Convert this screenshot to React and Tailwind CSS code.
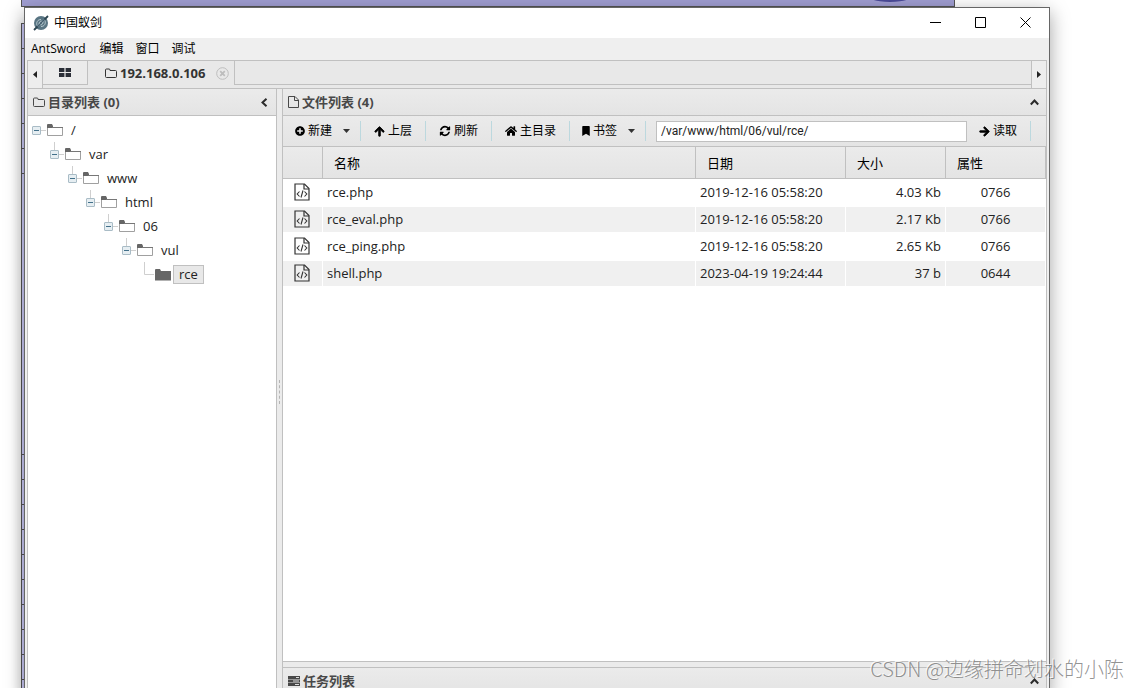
import React from "react";
import { FaPlusCircle, FaArrowUp, FaHome, FaBookmark, FaArrowRight } from "react-icons/fa";

const files = [
  { name: "rce.php", date: "2019-12-16 05:58:20", size: "4.03 Kb", mode: "0766" },
  { name: "rce_eval.php", date: "2019-12-16 05:58:20", size: "2.17 Kb", mode: "0766" },
  { name: "rce_ping.php", date: "2019-12-16 05:58:20", size: "2.65 Kb", mode: "0766" },
  { name: "shell.php", date: "2023-04-19 19:24:44", size: "37 b", mode: "0644" },
];

const path = ["/", "var", "www", "html", "06", "vul", "rce"];

function Logo() {
  return (
    <svg className="size-4" viewBox="0 0 16 16" aria-hidden="true">
      <circle cx="8" cy="8" r="7" fill="#587482" />
      <path d="M4 10.500c-1-3 0.500-6 4-6M12 5.500c1 3-0.500 6-4 6M6 9.500c0-2 0.500-3 2.500-3.500M10 6.500c0 2-0.500 3-2.500 3.500" stroke="#c3d3d8" strokeWidth="0.900" fill="none" />
      <path d="M1 15L4.500 11.500M11.500 4.500L15 1" stroke="#2c4450" strokeWidth="1.800" />
      <path d="M4.500 11.500L11.500 4.500" stroke="#40586a" strokeWidth="0.900" />
    </svg>
  );
}

function FolderOutline() {
  return (
    <svg className="w-3 h-[11px] shrink-0" viewBox="0 0 12 11" fill="none" stroke="currentColor" aria-hidden="true">
      <path d="M0.500 2Q0.500 1 1.500 1H4Q5 1 5 2V2.500H10.500Q11.500 2.500 11.500 3.500V8.500Q11.500 9.500 10.500 9.500H1.500Q0.500 9.500 0.500 8.500Z" />
    </svg>
  );
}

function FileOutline() {
  return (
    <svg className="w-[11px] h-3 shrink-0" viewBox="0 0 11 12" fill="none" stroke="currentColor" aria-hidden="true">
      <path d="M0.500 0.500H7L10.500 4V11.500H0.500ZM6.500 0.500V4.500H10.500" />
    </svg>
  );
}

function CodeFile() {
  return (
    <svg className="w-4 h-[18px] ml-[7px]" viewBox="0 0 16 18" fill="none" stroke="#333" aria-hidden="true">
      <path d="M1 1H10.500L15 5.500V17H1Z" strokeWidth="1.200" />
      <path d="M10 1V6H15" strokeWidth="1.200" />
      <path d="M5.500 8.500L3.200 11L5.500 13.500M10.500 8.500L12.800 11L10.500 13.500M9 7.500L7 14.500" strokeWidth="1.100" />
    </svg>
  );
}

function Refresh() {
  return (
    <svg className="size-3" viewBox="0 0 1792 1792" fill="currentColor" aria-hidden="true">
      <path d="M1639 1056q0 5-1 7-64 268-268 434.500t-478 166.500q-146 0-282.500-55t-243.500-157l-129 129q-19 19-45 19t-45-19-19-45v-448q0-26 19-45t45-19h448q26 0 45 19t19 45-19 45l-137 137q71 66 161 102t187 36q134 0 250-65t186-179q11-17 53-117 8-23 30-23h192q13 0 22.500 9.500t9.500 22.500zm25-800v448q0 26-19 45t-45 19h-448q-26 0-45-19t-19-45 19-45l138-138q-148-137-349-137-134 0-250 65t-186 179q-11 17-53 117-8 23-30 23h-199q-13 0-22.500-9.500t-9.500-22.500v-7q65-268 270-434.500t480-166.500q146 0 284 55.500t245 156.500l130-129q19-19 45-19t45 19 19 45z" />
    </svg>
  );
}

function Caret() {
  return (
    <svg className="w-[7px] h-1 ml-2" viewBox="0 0 7 4" fill="#333" aria-hidden="true">
      <path d="M0 0H7L3.500 4Z" />
    </svg>
  );
}

function Chevron({ left }) {
  return (
    <svg className="size-[9px]" viewBox="0 0 9 9" fill="none" stroke="#2b2b2b" strokeWidth="2" aria-hidden="true">
      <path d={left ? "M6.500 0.800L2.500 4.500L6.500 8.200" : "M0.800 6.500L4.500 2.500L8.200 6.500"} />
    </svg>
  );
}

function ToolButton({ icon, children, caret }) {
  return (
    <>
      <button
        className={
          caret
            ? "flex items-center gap-[3px] h-5 pl-3 pr-[10px] text-xs whitespace-nowrap text-black"
            : "flex items-center gap-[3px] h-5 px-[13px] text-xs whitespace-nowrap text-black"
        }
      >
        {icon}
        {children}
        {caret && <Caret />}
      </button>
      <span className="w-px h-5 shrink-0 bg-[#bcd8de]" />
    </>
  );
}

function TreeNode({ level }) {
  const leaf = level === path.length - 1;
  return (
    <li>
      <div className="flex items-center h-6">
        {leaf ? (
          <svg className="w-[15px] h-6" viewBox="0 0 15 24" fill="none" stroke="#cfcfcf" aria-hidden="true">
            <path d="M4.500 0V12.500H14" />
          </svg>
        ) : (
          <button aria-label={"Collapse " + path[level]} className="w-[15px] h-6">
            <svg className="w-[15px] h-6" viewBox="0 0 15 24" fill="none" aria-hidden="true">
              {level > 0 && <path d="M4.500 0V8" stroke="#cfcfcf" />}
              <path d="M9 12.500H14" stroke="#cfcfcf" />
              <rect x="0.500" y="8.500" width="8" height="8" rx="0.500" fill="#e6eef2" stroke="#a9bcc6" />
              <path d="M2 12.500H7" stroke="#42708a" />
            </svg>
          </button>
        )}
        <svg className="w-4 h-[13px]" viewBox="0 0 16 13" aria-hidden="true">
          {leaf ? (
            <path d="M0 2Q0 1 1 1H5L6 3H16V12.500H0Z" fill="#666" />
          ) : (
            <>
              <path d="M0.500 3V11.500H15.500V3.500H6" fill="#fff" stroke="#a0a0a0" />
              <path d="M0 4V1Q0 0 1 0H5L6 2V4Z" fill="#666" />
              <path d="M5 3.500H16" stroke="#777" />
            </>
          )}
        </svg>
        <span
          className={
            leaf
              ? "ml-[2px] h-[19px] px-[5px] leading-[17px] border border-[#c0c0c0] bg-[#e8e8e8]"
              : "ml-[2px] h-[19px] px-[5px] leading-[17px] border border-transparent"
          }
        >
          {path[level]}
        </span>
      </div>
      {!leaf && (
        <ul className="pl-[18px]">
          <TreeNode level={level + 1} />
        </ul>
      )}
    </li>
  );
}

function PanelHeader({ icon, title, left }) {
  return (
    <header className="flex items-center h-[27px] shrink-0 border-b border-[#c0c0c0] bg-linear-to-b from-[#ebebeb] to-[#e4e4e4] pl-[5px] pr-[7px] gap-[3px] font-bold text-[#484848]">
      {icon}
      <h2 className="flex-1">{title}</h2>
      <button aria-label="Toggle panel">
        <Chevron left={left} />
      </button>
    </header>
  );
}

function PageBehind() {
  return (
    <div className="absolute inset-0 pl-[21px]" aria-hidden="true">
      <div className="relative h-[7px] w-[934px] overflow-hidden bg-[#a09ed2] border-b border-l border-r border-[#555]">
        <span className="absolute -top-4 left-[842px] h-[18px] w-[52px] rounded-[50%] bg-[#4a4a98]" />
      </div>
      <div className="mt-4 flex w-[5px] flex-col border-l border-[#555] bg-[#cdcbfa] shadow-[-2px_0_8px_rgba(0,0,0,0.12)]">
        {[0, 1, 2, 3, 4, 5].map((i) => (
          <span key={i} className="h-[25px] border-t border-[#555]" />
        ))}
        <span className="h-[281px] border-t border-[#555]" />
        {[0, 1, 2, 3, 4, 5, 6, 7, 8, 9].map((i) => (
          <span key={i} className="h-[25px] border-t border-[#555]" />
        ))}
      </div>
    </div>
  );
}

export default function App() {
  return (
    <div className="relative h-screen overflow-hidden bg-white pt-[7px] pl-6 pr-[89px] text-[13px] leading-5 text-[#222] font-['Open_Sans','Noto_Sans_CJK_SC',sans-serif]">
      <PageBehind />
      <div className="relative flex h-screen flex-col border border-b-0 border-[#666] bg-[#efefef] shadow-[0_5px_18px_rgba(0,0,0,0.36)]">
        <div className="flex items-center h-[30px] shrink-0 bg-white pl-2 text-xs text-black">
          <Logo />
          <h1 className="ml-[5px] flex-1">中国蚁剑</h1>
          <div className="mr-px flex pb-[2px]">
            <button aria-label="Minimize" className="flex w-[45px] justify-center">
              <svg className="size-[11px]" viewBox="0 0 11 11" stroke="#000" fill="none"><path d="M0 5.500H11" /></svg>
            </button>
            <button aria-label="Maximize" className="flex w-[45px] justify-center">
              <svg className="size-[11px]" viewBox="0 0 11 11" stroke="#000" fill="none"><path d="M0.500 0.500H10.500V10.500H0.500Z" /></svg>
            </button>
            <button aria-label="Close" className="flex w-[45px] justify-center">
              <svg className="size-[11px]" viewBox="0 0 11 11" stroke="#000" fill="none"><path d="M0.500 0.500L10.500 10.500M10.500 0.500L0.500 10.500" /></svg>
            </button>
          </div>
        </div>

        <nav className="flex items-center gap-3 h-[22px] shrink-0 pl-1.5 text-xs text-black">
          <button className="pr-[2px]">AntSword</button>
          <button>编辑</button>
          <button>窗口</button>
          <button>调试</button>
        </nav>

        <div className="flex min-h-0 flex-1 flex-col mx-[2px] border-x border-[#c0c0c0]">
          <div className="flex h-[29px] shrink-0 border-y border-[#c0c0c0] bg-[#e8e8e8]">
            <button aria-label="Scroll tabs left" className="flex w-[15px] items-center justify-center border-r border-[#c0c0c0] bg-[#ededed]">
              <svg className="w-1 h-[7px]" viewBox="0 0 4 7" fill="#222"><path d="M4 0V7L0 3.500Z" /></svg>
            </button>
            <button aria-label="Home tab" className="flex h-6 w-[45px] items-center justify-center border-r border-b border-[#c0c0c0] bg-[#ebebeb]">
              <svg className="w-3 h-[9px]" viewBox="0 0 12 9" fill="#2b2f38"><path d="M0 0H5.400V4H0ZM6.600 0H12V4H6.600ZM0 5H5.400V9H0ZM6.600 5H12V9H6.600Z" /></svg>
            </button>
            <div className="flex w-[147px] items-center border-r border-[#c0c0c0] h-6 pl-[17px] font-bold text-[#333]">
              <FolderOutline />
              <span className="ml-[3px]">192.168.0.106</span>
              <button aria-label="Close tab" className="ml-auto mr-[5px]">
                <svg className="size-[13px]" viewBox="0 0 13 13" fill="none" stroke="#bdbdbd"><circle cx="6.500" cy="6.500" r="5.800" /><path d="M4.200 4.200L8.800 8.800M8.800 4.200L4.200 8.800" strokeWidth="1.800" /></svg>
              </button>
            </div>
            <div className="h-6 flex-1 border-b border-[#c0c0c0]" />
            <button aria-label="Scroll tabs right" className="flex w-[15px] items-center justify-center border-l border-[#c0c0c0] bg-[#ededed]">
              <svg className="w-1 h-[7px]" viewBox="0 0 4 7" fill="#222"><path d="M0 0V7L4 3.500Z" /></svg>
            </button>
          </div>

          <div className="flex min-h-0 flex-1 bg-[#ebebeb]">
            <aside className="flex w-[249px] shrink-0 flex-col border-r border-[#c0c0c0] bg-white">
              <PanelHeader left icon={<FolderOutline />} title="目录列表 (0)" />
              <ul className="pl-1 pt-[2px]">
                <TreeNode level={0} />
              </ul>
            </aside>

            <div className="flex w-[5px] shrink-0 items-center justify-center">
              <span className="h-6 w-px border-l border-dashed border-[#b5b5b5]" />
            </div>

            <main className="flex min-w-0 flex-1 flex-col gap-[5px] border-l border-[#c0c0c0]">
              <section className="flex min-h-0 flex-1 flex-col border-b border-[#c0c0c0] bg-white">
                <PanelHeader icon={<FileOutline />} title="文件列表 (4)" />
                <div className="flex items-center h-[31px] shrink-0 border-b border-[#c0c0c0] bg-linear-to-b from-[#ebebeb] to-[#e4e4e4] pr-[15px]">
                  <ToolButton caret icon={<FaPlusCircle className="size-[10px]" />}>新建</ToolButton>
                  <ToolButton icon={<FaArrowUp className="size-[11px]" strokeWidth="36" stroke="currentColor" />}>上层</ToolButton>
                  <ToolButton icon={<Refresh />}>刷新</ToolButton>
                  <ToolButton icon={<FaHome className="size-3" />}>主目录</ToolButton>
                  <ToolButton caret icon={<FaBookmark className="h-[10px] w-2" />}>书签</ToolButton>
                  <input
                    aria-label="Path"
                    defaultValue="/var/www/html/06/vul/rce/"
                    className="ml-[10px] -mr-px h-[21px] min-w-0 flex-1 border border-[#c0c0c0] bg-white px-1 text-xs font-['Roboto',sans-serif]"
                  />
                  <ToolButton icon={<FaArrowRight className="size-[11px]" strokeWidth="36" stroke="currentColor" />}>读取</ToolButton>
                </div>
                <table className="w-full table-fixed border-separate border-spacing-0">
                  <thead>
                    <tr className="h-8 text-left text-black [&>th]:border-b [&>th]:border-r [&>th]:border-[#c0c0c0] [&>th]:bg-linear-to-b [&>th]:from-[#ebebeb] [&>th]:to-[#e4e4e4] [&>th]:p-0 [&>th]:pl-[11px] [&>th]:font-normal">
                      <th className="w-10" aria-label="Type" />
                      <th>名称</th>
                      <th className="w-[150px]">日期</th>
                      <th className="w-[100px]">大小</th>
                      <th className="w-[100px]">属性</th>
                    </tr>
                  </thead>
                  <tbody>
                    {files.map((f) => (
                      <tr key={f.name} className="h-[27px] even:bg-[#f0f0f0] [&>td]:border-y [&>td]:border-r [&>td]:border-white [&>td]:px-1 [&>td]:pt-0 [&>td]:pb-[2px]">
                        <td><CodeFile /></td>
                        <td>{f.name}</td>
                        <td>{f.date}</td>
                        <td className="text-right">{f.size}</td>
                        <td className="text-center">{f.mode}</td>
                      </tr>
                    ))}
                  </tbody>
                </table>
              </section>
              <section className="shrink-0 border-t border-[#c0c0c0]">
                <PanelHeader
                  icon={
                    <svg className="w-3 h-[10px] shrink-0" viewBox="0 0 12 10" aria-hidden="true">
                      <path d="M0 0H12V3H0ZM0 3.500H12V6.500H0ZM0 7H12V10H0Z" fill="#484848" />
                      <path d="M8 1H11V2H8ZM5 4.500H11V5.500H5ZM7 8H11V9H7Z" fill="#ddd" />
                    </svg>
                  }
                  title="任务列表"
                />
              </section>
            </main>
          </div>
        </div>
      </div>
      <span className="pointer-events-none absolute bottom-[5px] right-[15px] text-xl leading-7 text-[#777]/80 [text-shadow:-1px_-1px_0_rgba(255,255,255,0.8)] font-['Noto_Sans_CJK_SC',sans-serif] font-light">
        CSDN @边缘拼命划水的小陈
      </span>
    </div>
  );
}
